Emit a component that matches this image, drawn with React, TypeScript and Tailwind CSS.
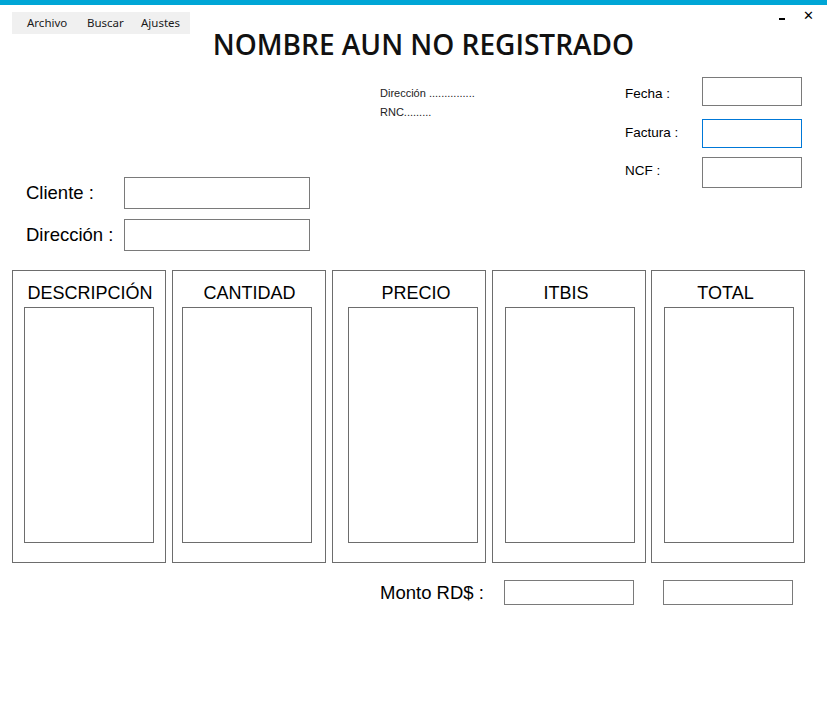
import React from 'react';

const columns = [
  { title: 'DESCRIPCIÓN', head: 'pl-[2px]', inner: 'ml-[11px]' },
  { title: 'CANTIDAD', head: 'pl-[1px]', inner: 'ml-[9px]' },
  { title: 'PRECIO', head: 'pl-[14px]', inner: 'ml-[15px]' },
  { title: 'ITBIS', head: 'pr-[6px]', inner: 'ml-[12px]' },
  { title: 'TOTAL', head: 'pr-[5px]', inner: 'ml-[12px]' },
];

const App: React.FC = () => {
  return (
    <div className="relative w-[827px] h-[709px] bg-white overflow-hidden text-black font-['Liberation_Sans',Arial,sans-serif]">
      <div className="h-[5px] bg-[#00a6d6]" />

      {/* window controls */}
      <div className="absolute top-[9px] right-[13px] flex items-center gap-[18px]">
        <div className="w-[6px] h-[2px] bg-black mt-[7px]" />
        <span className="text-[13px] leading-none font-['DejaVu_Sans',sans-serif]">✕</span>
      </div>

      {/* menu + title */}
      <div className="grid h-[72px] pt-[7px]">
        <div className="col-start-1 row-start-1 self-start ml-[12px] w-[178px] h-[22px] bg-[#f0f0f0] flex items-center pl-[15px] text-[11.5px] text-[#1a1a1a] font-['Noto_Sans','Open_Sans',sans-serif]">
          <span className="w-[60px]">Archivo</span>
          <span className="w-[54px]">Buscar</span>
          <span>Ajustes</span>
        </div>
        <h1 className="col-start-1 row-start-1 self-start justify-self-center pl-[20px] mt-[18px] text-[28px] leading-[28px] font-semibold text-[#111] font-['Open_Sans','Noto_Sans',sans-serif]">
          NOMBRE AUN NO REGISTRADO
        </h1>
      </div>

      {/* info + client */}
      <div className="flex">
        <div className="flex-1 flex flex-col">
          <div className="h-[100px] pl-[380px] pt-[7px] text-[11px] leading-[19px] text-[#222]">
            <p>Dirección ...............</p>
            <p>RNC.........</p>
          </div>
          <div className="flex flex-col gap-[10px] pl-[26px]">
            <div className="flex items-center">
              <span className="w-[98px] text-[18.5px]">Cliente :</span>
              <div className="w-[186px] h-[32px] border border-[#7a7a7a]" />
            </div>
            <div className="flex items-center">
              <span className="w-[98px] text-[18.5px]">Dirección :</span>
              <div className="w-[186px] h-[32px] border border-[#7a7a7a]" />
            </div>
          </div>
        </div>
        <div className="w-[177px] mr-[25px] flex flex-col text-[13.5px]">
          <div className="flex items-center">
            <span className="w-[77px] pt-[6px]">Fecha :</span>
            <div className="w-[100px] h-[29px] border border-[#7a7a7a]" />
          </div>
          <div className="flex items-center mt-[13px]">
            <span className="w-[77px]">Factura :</span>
            <div className="w-[100px] h-[29px] border border-[#0078d7]" />
          </div>
          <div className="flex items-center mt-[9px]">
            <span className="w-[77px] pb-[2px]">NCF :</span>
            <div className="w-[100px] h-[31px] border border-[#7a7a7a]" />
          </div>
        </div>
      </div>

      {/* columns */}
      <div className="flex gap-[6px] pl-[12px] mt-[19px]">
        {columns.map((c, i) => (
          <div key={c.title} className={`w-[154px] h-[293px] border border-[#6d6d6d] flex flex-col ${i === 4 ? '-ml-[1px]' : ''}`}>
            <div className={`h-[36px] pt-[11px] text-center text-[18px] leading-[22px] ${c.head}`}>{c.title}</div>
            <div className={`w-[130px] h-[236px] border border-[#6d6d6d] ${c.inner}`} />
          </div>
        ))}
      </div>

      {/* monto */}
      <div className="flex items-center pl-[380px] mt-[16px]">
        <span className="w-[124px] text-[18.5px]">Monto RD$ :</span>
        <div className="w-[130px] h-[25px] border border-[#7a7a7a]" />
        <div className="w-[130px] h-[25px] border border-[#7a7a7a] ml-[29px]" />
      </div>
    </div>
  );
};

export default App;
